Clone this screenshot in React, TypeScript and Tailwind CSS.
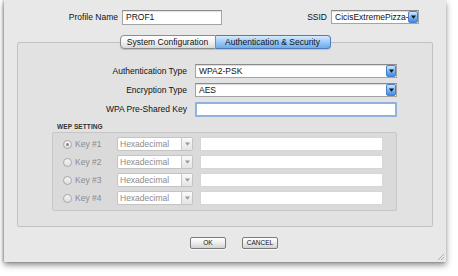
import React from "react";

const font = { fontFamily: '"Liberation Sans", Arial, sans-serif' };

function BlueArrow({ w = 10 }: { w?: number }) {
  return (
    <div
      className="h-full flex items-center justify-center rounded-[2px] border border-[#4c7fc4] bg-gradient-to-b from-[#cfe7fe] via-[#7ab8f5] to-[#3f8ae6]"
      style={{ width: w }}
    >
      <svg width="5" height="4" viewBox="0 0 5 4">
        <path d="M0 0.5 H5 L2.5 3.8 Z" fill="#111" />
      </svg>
    </div>
  );
}

function BlueSelect({ text, width, height }: { text: string; width: number; height: number }) {
  return (
    <div
      className="flex items-stretch bg-white border border-[#a4a4a4] border-t-[#8a8a8a] shadow-[inset_0_1px_1px_rgba(0,0,0,0.15)]"
      style={{ width, height }}
    >
      <div className="flex-1 overflow-hidden whitespace-nowrap pl-[3px] text-[8.5px] leading-[12px] text-[#111]">{text}</div>
      <BlueArrow />
    </div>
  );
}

function GraySelect() {
  return (
    <div className="flex items-stretch w-[76px] h-[14px] bg-white border border-[#c4c4c4] rounded-[2px]">
      <div className="flex-1 pl-[2px] text-[8.5px] leading-[12px] text-[#8c8c8c]">Hexadecimal</div>
      <div className="w-[11px] flex items-center justify-center border-l border-[#c8c8c8] bg-gradient-to-b from-[#fafafa] to-[#e4e4e4]">
        <svg width="5" height="4" viewBox="0 0 5 4">
          <path d="M0 0.5 H5 L2.5 3.8 Z" fill="#9a9a9a" />
        </svg>
      </div>
    </div>
  );
}

function Radio({ checked }: { checked?: boolean }) {
  return (
    <div className="w-[9px] h-[9px] rounded-full border border-[#a8a8a8] bg-gradient-to-b from-[#f4f4f4] to-[#e0e0e0] flex items-center justify-center">
      {checked && <div className="w-[3px] h-[3px] rounded-full bg-[#8a8a8a]" />}
    </div>
  );
}

function WepRow({ n, checked }: { n: number; checked?: boolean }) {
  return (
    <div className="flex items-center h-[14px]">
      <div className="ml-[10px]">
        <Radio checked={checked} />
      </div>
      <div className="ml-[3px] w-[42px] text-[8.5px] text-[#8c8c8c] whitespace-nowrap">Key #{n}</div>
      <GraySelect />
      <div className="ml-[7px] w-[183px] h-[14px] bg-white border border-[#d6d6d6]" />
    </div>
  );
}

function Button({ label }: { label: string }) {
  return (
    <div className="w-[36px] h-[12px] rounded-[2px] border border-[#7a7a7a] bg-gradient-to-b from-[#ffffff] via-[#ececec] to-[#d2d2d2] flex items-center justify-center text-[6.5px] text-[#111] shadow-[0_1px_0_rgba(255,255,255,0.7)]">
      {label}
    </div>
  );
}

export default function App() {
  return (
    <div className="w-[458px] h-[276px] bg-white pl-[4px]" style={font}>
      <div className="relative w-[442px] h-[262px] bg-[#e8e8e8] shadow-[0_3px_6px_rgba(0,0,0,0.45),-1px_0_2px_rgba(0,0,0,0.25)] flex flex-col">
        {/* top row */}
        <div className="flex items-start mt-[10px] h-[15px]">
          <div className="w-[114px] h-[15px] text-right text-[8.5px] leading-[15px] text-[#111]">Profile Name</div>
          <div className="ml-[4px] w-[100px] h-[15px] bg-white border border-[#a4a4a4] border-t-[#8c8c8c] shadow-[inset_0_1px_1px_rgba(0,0,0,0.12)] pl-[3px] text-[8.5px] leading-[13px] text-[#111]">
            PROF1
          </div>
          <div className="w-[105px] h-[14px] text-right text-[8.5px] leading-[14px] text-[#111]">SSID</div>
          <div className="ml-[4px]">
            <BlueSelect text="CicisExtremePizza-" width={88} height={14} />
          </div>
        </div>

        {/* tabs */}
        <div className="relative z-10 flex justify-center mt-[10px] ml-[13px] w-[416px]">
          <div className="w-[96px] h-[14px] rounded-l-[4px] border border-[#8c8c8c] bg-gradient-to-b from-[#ffffff] via-[#f2f2f2] to-[#d8d8d8] text-[8.5px] leading-[12px] text-center text-[#111] shadow-[0_1px_1px_rgba(0,0,0,0.15)]">
            System Configuration
          </div>
          <div className="w-[115px] h-[14px] rounded-r-[4px] border border-l-0 border-[#4d7cbc] bg-gradient-to-b from-[#d6ebfe] via-[#9ccaf6] to-[#6eacec] text-[8.5px] leading-[12px] text-center text-[#111] shadow-[0_1px_1px_rgba(0,0,0,0.15)]">
            Authentication &amp; Security
          </div>
        </div>

        {/* group box */}
        <div className="-mt-[7px] ml-[13px] w-[416px] h-[185px] border border-[#c2c2c2] bg-[#e2e2e2] rounded-[2px] flex flex-col">
          <div className="mt-[21px] flex flex-col gap-[5px]">
            <div className="flex items-center h-[14px]">
              <div className="w-[169px] text-right text-[8.5px] text-[#111] whitespace-nowrap">Authentication Type</div>
              <div className="ml-[8px]">
                <BlueSelect text="WPA2-PSK" width={202} height={14} />
              </div>
            </div>
            <div className="flex items-center h-[14px]">
              <div className="w-[169px] text-right text-[8.5px] text-[#111] whitespace-nowrap">Encryption Type</div>
              <div className="ml-[8px]">
                <BlueSelect text="AES" width={202} height={14} />
              </div>
            </div>
            <div className="flex items-center h-[15px]">
              <div className="w-[169px] text-right text-[8.5px] text-[#111] whitespace-nowrap">WPA Pre-Shared Key</div>
              <div className="ml-[8px] w-[202px] h-[15px] bg-white border-[2px] border-[#8fb2df] rounded-[1px]" />
            </div>
          </div>

          <div className="ml-[39px] mt-[5px] h-[10px] text-[6.5px] font-bold leading-[10px] text-[#333] tracking-[0.1px]">
            WEP SETTING
          </div>
          <div className="ml-[34px] w-[345px] h-[79px] border border-[#c6c6c6] bg-[#dadada] rounded-[2px] flex flex-col gap-[4px] pt-[4px]">
            <WepRow n={1} checked />
            <WepRow n={2} />
            <WepRow n={3} />
            <WepRow n={4} />
          </div>
        </div>

        {/* buttons */}
        <div className="flex mt-[10px] ml-[186px] gap-[16px]">
          <Button label="OK" />
          <Button label="CANCEL" />
        </div>

        {/* resize grip */}
        <svg className="absolute right-[1px] bottom-[1px]" width="8" height="8" viewBox="0 0 8 8">
          <path d="M1 7 L7 1 M4 7 L7 4 M6.5 7 L7 6.5" stroke="#9a9a9a" strokeWidth="0.8" />
        </svg>
      </div>
    </div>
  );
}
